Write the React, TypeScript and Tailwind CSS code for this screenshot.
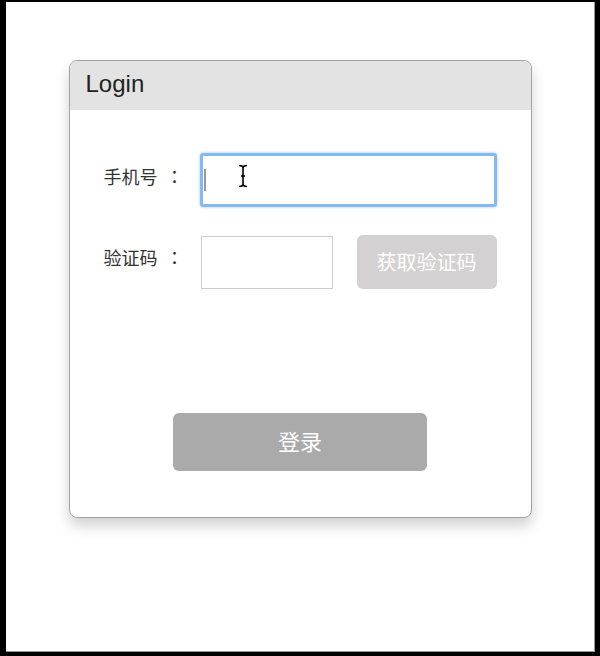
import React from 'react';

const cjk = { fontFamily: '"Noto Sans CJK SC", "Liberation Sans", sans-serif' };

const Field = ({ label, children }: { label: string; children: React.ReactNode }) => (
  <div className="flex items-center">
    <div className="w-[97px] text-[18px] text-[#333] -translate-y-[4px]" style={cjk}>
      {label}
      <span className="ml-[8px]" style={{ fontFamily: '"Noto Sans CJK TC", sans-serif' }}>：</span>
    </div>
    {children}
  </div>
);

export default function App() {
  return (
    <div className="h-[656px] border-l-[6px] border-r-[5px] border-t-2 border-b-4 border-black bg-black">
      <div className="h-full bg-white border-r border-b border-[#9a9a9a] pt-[58px]">
        <div className="mx-auto w-[463px] rounded-lg border border-[#a3a3a3] bg-white shadow-[0_8px_14px_rgba(0,0,0,0.18)] overflow-hidden">
          <div className="h-[49px] bg-[#e3e3e3] flex items-center pl-4 pb-[3px] text-[24px] text-[#222]" style={{ fontFamily: '"Liberation Sans", sans-serif' }}>
            Login
          </div>
          <div className="px-[34px] pt-[43px] pb-[46px]">
            <Field label="手机号">
              <div className="relative w-[297px] h-[54px] rounded-[3px] border-[3px] border-[#86b9f2] shadow-[0_0_3px_#9cc6f5]">
                <div className="absolute left-[1px] top-[13px] w-[2px] h-[22px] bg-[#999]" />
                <svg className="absolute left-[34px] top-[8px]" width="12" height="24" viewBox="0 0 12 24">
                  <path d="M2 1.5 Q6 1.5 6 4 Q6 1.5 10 1.5 M6 4 V20 M2 22.5 Q6 22.5 6 20 Q6 22.5 10 22.5 M4 12 H8" stroke="#000" strokeWidth="1.6" fill="none" />
                </svg>
              </div>
            </Field>
            <div className="mt-[27px]">
              <Field label="验证码">
                <div className="w-[132px] h-[53px] border border-[#cccccc] mt-[2px]" />
                <button className="ml-[24px] w-[140px] h-[54px] rounded-md bg-[#d3d1d1] text-white text-[20px]" style={cjk}>
                  获取验证码
                </button>
              </Field>
            </div>
            <div className="mt-[124px] flex justify-center">
              <button className="w-[254px] h-[58px] rounded-md bg-[#aaaaaa] text-white text-[22px] pb-[3px]" style={cjk}>
                登录
              </button>
            </div>
          </div>
        </div>
      </div>
    </div>
  );
}
